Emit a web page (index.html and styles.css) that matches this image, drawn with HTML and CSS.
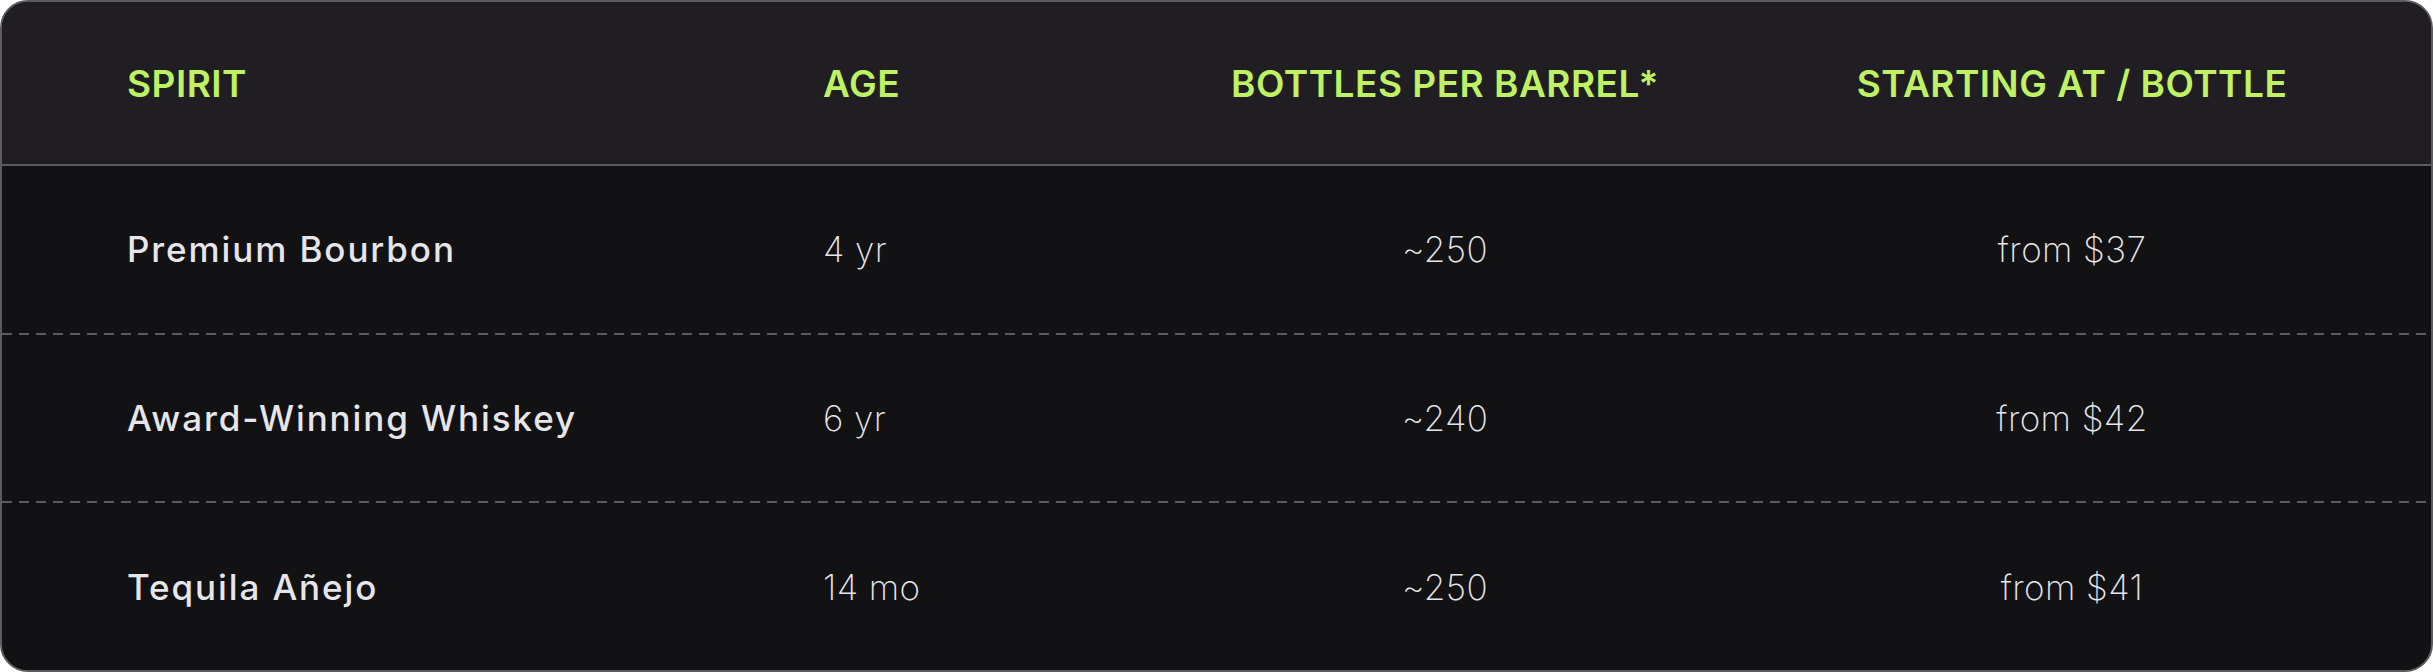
FILE: index.html
```html
<!DOCTYPE html>
<html lang="en">
<head>
<meta charset="utf-8">
<title>Barrel pricing</title>
<link rel="stylesheet" href="styles.css">
</head>
<body>
<div class="card">
  <div class="row head">
    <div class="cell left">SPIRIT</div>
    <div class="cell left">AGE</div>
    <div class="cell center">BOTTLES PER BARREL*</div>
    <div class="cell center">STARTING AT / BOTTLE</div>
  </div>
  <div class="body">
    <div class="row item">
      <div class="cell left name">Premium Bourbon</div>
      <div class="cell left val">4 yr</div>
      <div class="cell center val">~250</div>
      <div class="cell center val">from $37</div>
    </div>
    <div class="row item">
      <div class="cell left name">Award-Winning Whiskey</div>
      <div class="cell left val">6 yr</div>
      <div class="cell center val">~240</div>
      <div class="cell center val">from $42</div>
    </div>
    <div class="row item">
      <div class="cell left name">Tequila Añejo</div>
      <div class="cell left val">14 mo</div>
      <div class="cell center val">~250</div>
      <div class="cell center val">from $41</div>
    </div>
  </div>
</div>
</body>
</html>
```
FILE: styles.css
```css
* { box-sizing: border-box; }
html, body { margin: 0; padding: 0; background: #ffffff; }
body { font-family: Inter, "Liberation Sans", sans-serif; }

.card {
  width: 2433px;
  height: 672px;
  border: 2px solid #5c5b60;
  border-radius: 28px;
  overflow: hidden;
  background: #121114;
  display: flex;
  flex-direction: column;
}

.row {
  display: grid;
  grid-template-columns: 696px 479px 536px 1fr;
  align-items: center;
}

.head {
  height: 164px;
  flex: none;
  background: #201e22;
  border-bottom: 2px solid #5a595e;
  color: #bef264;
  font-weight: 600;
  font-size: 37px;
  letter-spacing: 0.5px;
}

.body {
  flex: 1;
  display: flex;
  flex-direction: column;
}

.item {
  flex: 1;
  color: #e6e5e9;
  font-size: 35px;
}

.item + .item {
  background-image: repeating-linear-gradient(to right, #5c5b60 0 10px, transparent 10px 17px);
  background-size: 100% 2px;
  background-repeat: no-repeat;
  background-position: 0 0;
  padding-top: 2px;
}

.cell { white-space: nowrap; }
.left { padding-left: 125px; }
.center { text-align: center; }

.name { font-weight: 450; letter-spacing: 1.9px; }
.val { font-weight: 250; letter-spacing: 0.4px; }
```
